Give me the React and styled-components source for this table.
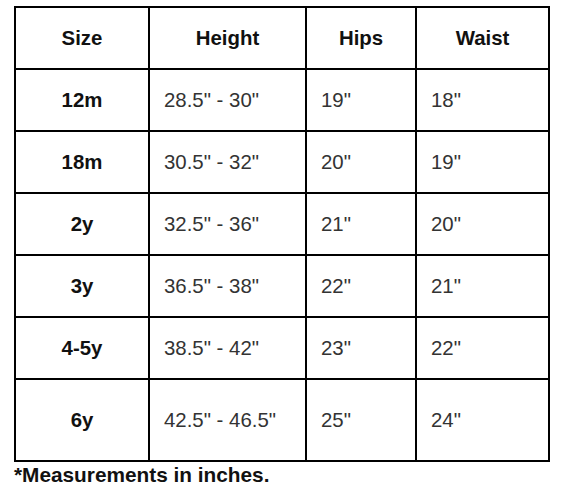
import React from "react";
import styled, { createGlobalStyle } from "styled-components";

const GlobalStyle = createGlobalStyle`
    body {
        margin: 0;
        background: #fff;
        font-family: "Liberation Sans", Arial, sans-serif;
    }
`;

const Wrapper = styled.div`
    padding: 6px 14px 0 14px;
`;

const Table = styled.table`
    width: 534px;
    border-collapse: collapse;
    table-layout: fixed;
    border: 2px solid #000;
`;

const HeadCell = styled.th`
    border: 2px solid #000;
    height: 60px;
    padding: 0;
    font-size: 20.4px;
    font-weight: 700;
    color: #111;
    text-align: center;
    vertical-align: middle;
`;

const Cell = styled.td`
    border: 2px solid #000;
    height: ${ props => props.tall ? '80px' : '60px' };
    padding: 0 0 0 14px;
    font-size: 20.4px;
    font-weight: ${ props => props.bold ? 700 : 400 };
    color: ${ props => props.bold ? '#111' : '#333' };
    text-align: ${ props => props.bold ? 'center' : 'left' };
    vertical-align: middle;
    ${ props => props.bold && 'padding: 0;' }
`;

const Note = styled.p`
    margin: 0;
    padding-top: 1px;
    font-size: 20.8px;
    font-weight: 700;
    line-height: 24px;
    color: #111;
`;

const rows = [
    { size: '12m', height: '28.5" - 30"', hips: '19"', waist: '18"' },
    { size: '18m', height: '30.5" - 32"', hips: '20"', waist: '19"' },
    { size: '2y', height: '32.5" - 36"', hips: '21"', waist: '20"' },
    { size: '3y', height: '36.5" - 38"', hips: '22"', waist: '21"' },
    { size: '4-5y', height: '38.5" - 42"', hips: '23"', waist: '22"' },
    { size: '6y', height: '42.5" - 46.5"', hips: '25"', waist: '24"', tall: true },
];

export default function App() {
    return (
        <Wrapper>
            <GlobalStyle />
            <Table>
                <colgroup>
                    <col style={{ width: 134 }} />
                    <col style={{ width: 157 }} />
                    <col style={{ width: 110 }} />
                    <col style={{ width: 133 }} />
                </colgroup>
                <thead>
                    <tr>
                        <HeadCell>Size</HeadCell>
                        <HeadCell>Height</HeadCell>
                        <HeadCell>Hips</HeadCell>
                        <HeadCell>Waist</HeadCell>
                    </tr>
                </thead>
                <tbody>
                    {
                        rows.map(({ size, height, hips, waist, tall }) => (
                            <tr key={ size }>
                                <Cell bold tall={ tall }>{ size }</Cell>
                                <Cell tall={ tall }>{ height }</Cell>
                                <Cell tall={ tall }>{ hips }</Cell>
                                <Cell tall={ tall }>{ waist }</Cell>
                            </tr>
                        ))
                    }
                </tbody>
            </Table>
            <Note>*Measurements in inches.</Note>
        </Wrapper>
    );
}
